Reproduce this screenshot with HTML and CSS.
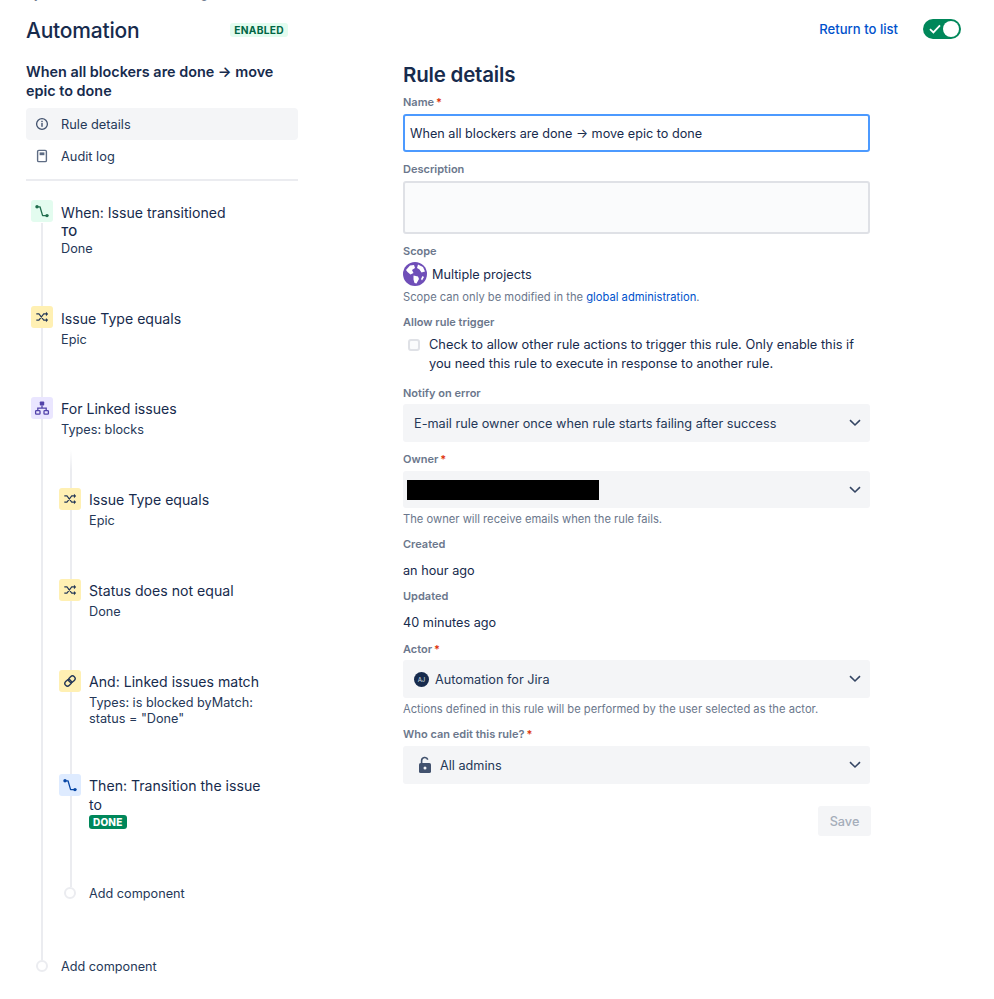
FILE: index.html
```html
<!DOCTYPE html>
<html lang="en">
<head>
<meta charset="utf-8">
<title>Automation</title>
<link rel="stylesheet" href="styles.css">
</head>
<body>
<div class="page">
  <div class="crumbs">System / Global / Project settings / Automation rules / Edit</div>
  <header class="topbar">
    <div class="topleft">
      <h1>Automation</h1>
      <span class="lozenge">ENABLED</span>
    </div>
    <div class="topright">
      <a class="link return">Return to list</a>
      <span class="toggle">
        <svg class="tick" viewBox="0 0 12 10" width="12" height="10"><path d="M1 5.2 4.4 8.4 11 1.4" fill="none" stroke="#fff" stroke-width="1.8"/></svg>
        <span class="knob"></span>
      </span>
    </div>
  </header>
  <main class="columns">
    <aside class="side">
      <h2 class="rule-name">When all blockers are done → move epic to done</h2>
      <nav class="nav">
        <div class="nav-item active">
          <svg class="nav-icon" viewBox="0 0 14 14" width="14" height="14"><circle cx="7" cy="7" r="5.4" fill="none" stroke="#42526e" stroke-width="1.3"/><rect x="6.3" y="6" width="1.4" height="3.8" fill="#42526e"/><rect x="6.3" y="3.8" width="1.4" height="1.4" fill="#42526e"/></svg>
          <span>Rule details</span>
        </div>
        <div class="nav-item">
          <svg class="nav-icon" viewBox="0 0 14 14" width="14" height="14"><rect x="2.6" y="1.4" width="8.8" height="11.2" rx="1.2" fill="none" stroke="#5e6c84" stroke-width="1.4"/><rect x="4.6" y="3.4" width="4.8" height="2.8" fill="#5e6c84"/></svg>
          <span>Audit log</span>
        </div>
      </nav>
      <hr class="divider">
      <div class="timeline">
        <div class="item item-first">
          <span class="badge green">
            <svg viewBox="0 0 16 16" width="16" height="16"><path d="M3 3.8H6L8.6 12.6H13" fill="none" stroke="#216e4e" stroke-width="1.3" stroke-linejoin="round"/><circle cx="3" cy="3.8" r="1.7" fill="#216e4e"/><circle cx="13" cy="12.6" r="1.7" fill="#216e4e"/></svg>
          </span>
          <div class="item-text">
            <div class="title">When: Issue transitioned</div>
            <div class="to">TO</div>
            <div class="sub">Done</div>
          </div>
        </div>
        <div class="item item-two">
          <span class="badge yellow">
            <svg viewBox="0 0 16 16" width="14" height="14"><path d="M1.5 4.5H4.5L10 11.5H13.5M1.5 11.5H4.5L10 4.5H13.5" fill="none" stroke="#253858" stroke-width="1.3"/><path d="M12.5 2 15 4.5 12.5 7ZM12.5 9 15 11.5 12.5 14Z" fill="#253858"/></svg>
          </span>
          <div class="item-text">
            <div class="title">Issue Type equals</div>
            <div class="sub">Epic</div>
          </div>
        </div>
        <div class="item item-branch">
          <span class="badge purple">
            <svg viewBox="0 0 16 16" width="16" height="16"><rect x="5.8" y="1.5" width="4.4" height="4" rx=".8" fill="#5243aa"/><path d="M8 5.5V8M3.8 11V8.2H12.2V11" fill="none" stroke="#5243aa" stroke-width="1.3"/><rect x="1.6" y="10.6" width="4.4" height="3.6" rx=".8" fill="none" stroke="#5243aa" stroke-width="1.3"/><rect x="10" y="10.6" width="4.4" height="3.6" rx=".8" fill="none" stroke="#5243aa" stroke-width="1.3"/></svg>
          </span>
          <div class="item-text">
            <div class="title">For Linked issues</div>
            <div class="sub">Types: blocks</div>
          </div>
        </div>
        <div class="nested">
          <div class="item item-n1">
            <span class="badge yellow">
              <svg viewBox="0 0 16 16" width="14" height="14"><path d="M1.5 4.5H4.5L10 11.5H13.5M1.5 11.5H4.5L10 4.5H13.5" fill="none" stroke="#253858" stroke-width="1.3"/><path d="M12.5 2 15 4.5 12.5 7ZM12.5 9 15 11.5 12.5 14Z" fill="#253858"/></svg>
            </span>
            <div class="item-text">
              <div class="title">Issue Type equals</div>
              <div class="sub">Epic</div>
            </div>
          </div>
          <div class="item item-n2">
            <span class="badge yellow">
              <svg viewBox="0 0 16 16" width="14" height="14"><path d="M1.5 4.5H4.5L10 11.5H13.5M1.5 11.5H4.5L10 4.5H13.5" fill="none" stroke="#253858" stroke-width="1.3"/><path d="M12.5 2 15 4.5 12.5 7ZM12.5 9 15 11.5 12.5 14Z" fill="#253858"/></svg>
            </span>
            <div class="item-text">
              <div class="title">Status does not equal</div>
              <div class="sub">Done</div>
            </div>
          </div>
          <div class="item item-n3">
            <span class="badge yellow">
              <svg viewBox="0 0 16 16" width="14" height="14"><g fill="none" stroke="#253858" stroke-width="1.6" transform="rotate(-45 8 8)"><rect x="1" y="5" width="8" height="6" rx="3"/><rect x="7" y="5" width="8" height="6" rx="3"/></g></svg>
            </span>
            <div class="item-text">
              <div class="title">And: Linked issues match</div>
              <div class="sub">Types: is blocked byMatch:<br>status = "Done"</div>
            </div>
          </div>
          <div class="item item-n4">
            <span class="badge blue">
              <svg viewBox="0 0 16 16" width="16" height="16"><path d="M3 3.8H6L8.6 12.6H13" fill="none" stroke="#0747a6" stroke-width="1.3" stroke-linejoin="round"/><circle cx="3" cy="3.8" r="1.7" fill="#0747a6"/><circle cx="13" cy="12.6" r="1.7" fill="#0747a6"/></svg>
            </span>
            <div class="item-text">
              <div class="title title-wrap">Then: Transition the issue<br>to</div>
              <span class="done">DONE</span>
            </div>
          </div>
          <div class="add add-inner">
            <span class="dot"></span>
            <span class="add-label">Add component</span>
          </div>
        </div>
        <div class="add add-outer">
          <span class="dot"></span>
          <span class="add-label">Add component</span>
        </div>
      </div>
    </aside>
    <section class="detail">
      <h2 class="detail-title">Rule details</h2>
      <label class="label label-first">Name<span class="req">*</span></label>
      <div class="input focus">When all blockers are done → move epic to done</div>
      <label class="label label-desc">Description</label>
      <div class="textarea"></div>
      <label class="label label-scope">Scope</label>
      <div class="scope">
        <svg viewBox="0 0 24 24" width="24" height="24"><circle cx="12" cy="12" r="12" fill="#6f4eb8"/><path d="M3 8 7 3.5 11 3 12 6 9 8 10.5 11 7.5 12.5 4.5 10ZM15 2.5 20 5 22 9.5 18.5 10.5 16.5 7.5 14 6ZM10.5 13.5 15 14.5 16 17 13.5 21.5 11.5 21 10.5 17.5ZM19.5 14 21 15 19 18.5 18 17Z" fill="#fff"/></svg>
        <span>Multiple projects</span>
      </div>
      <p class="hint hint-scope">Scope can only be modified in the <a class="link">global administration</a>.</p>
      <label class="label label-allow">Allow rule trigger</label>
      <div class="check">
        <span class="box"></span>
        <span class="check-text">Check to allow other rule actions to trigger this rule. Only enable this if you need this rule to execute in response to another rule.</span>
      </div>
      <label class="label label-notify">Notify on error</label>
      <div class="select"><span>E-mail rule owner once when rule starts failing after success</span>
        <svg class="chev" viewBox="0 0 12 8" width="12" height="8"><path d="M1 1.2 6 6 11 1.2" fill="none" stroke="#344563" stroke-width="1.6"/></svg>
      </div>
      <label class="label label-owner">Owner<span class="req">*</span></label>
      <div class="select select-owner"><span class="redact"></span>
        <svg class="chev" viewBox="0 0 12 8" width="12" height="8"><path d="M1 1.2 6 6 11 1.2" fill="none" stroke="#344563" stroke-width="1.6"/></svg>
      </div>
      <p class="hint hint-owner">The owner will receive emails when the rule fails.</p>
      <label class="label label-created">Created</label>
      <div class="value value-created">an hour ago</div>
      <label class="label label-updated">Updated</label>
      <div class="value value-updated">40 minutes ago</div>
      <label class="label label-actor">Actor<span class="req">*</span></label>
      <div class="select"><span class="with-icon"><span class="avatar">AJ</span>Automation for Jira</span>
        <svg class="chev" viewBox="0 0 12 8" width="12" height="8"><path d="M1 1.2 6 6 11 1.2" fill="none" stroke="#344563" stroke-width="1.6"/></svg>
      </div>
      <p class="hint hint-actor">Actions defined in this rule will be performed by the user selected as the actor.</p>
      <label class="label label-who">Who can edit this rule?<span class="req">*</span></label>
      <div class="select select-who"><span class="with-icon with-lock">
        <svg viewBox="0 0 14 18" width="14" height="18"><path d="M3.6 7V4.6a3.2 3.2 0 0 1 6.2-1" fill="none" stroke="#42526e" stroke-width="1.6"/><rect x="1" y="7" width="12" height="10" rx="1.6" fill="#42526e"/><circle cx="7" cy="12" r="1.5" fill="#f4f5f7"/></svg>
        All admins</span>
        <svg class="chev" viewBox="0 0 12 8" width="12" height="8"><path d="M1 1.2 6 6 11 1.2" fill="none" stroke="#344563" stroke-width="1.6"/></svg>
      </div>
      <div class="actions"><button class="save" type="button">Save</button></div>
    </section>
  </main>
</div>
</body>
</html>
```
FILE: styles.css
```css
* { box-sizing: border-box; }
html, body { margin: 0; padding: 0; background: #fff; }
body { font-family: Inter, "Liberation Sans", sans-serif; color: #172b4d; height: 999px; overflow: hidden; }
.page { padding: 0 33px 0 26px; }
.crumbs { font-size: 12px; line-height: 16px; color: #6b778c; margin-top: -14px; height: 16px; white-space: nowrap; }
.topbar { display: flex; justify-content: space-between; align-items: center; margin-top: 13px; height: 28px; }
.topleft { display: flex; align-items: center; width: 262px; justify-content: space-between; }
h1 { margin: 0; padding-top: 3px; font-size: 21px; font-weight: 500; line-height: 28px; letter-spacing: -0.2px; }
.lozenge { background: #e3fcef; color: #006644; font-size: 10.2px; font-weight: 700; line-height: 14px; padding: 0 4px; border-radius: 3px; letter-spacing: .3px; margin-top: 2px; }
.topright { display: flex; align-items: center; gap: 25px; }
.link { color: #0052cc; }
.return { font-size: 13.1px; font-weight: 500; }
.toggle { display: flex; align-items: center; width: 38px; height: 20px; border-radius: 10px; background: #00875a; padding: 2px; justify-content: space-between; }
.tick { margin-left: 4px; }
.knob { width: 16px; height: 16px; border-radius: 50%; background: #fff; }
.columns { display: flex; margin-top: 11px; }
.side { width: 272px; flex: none; }
.rule-name { margin: 0; font-size: 14.4px; font-weight: 600; line-height: 18.5px; padding-top: 9px; }
.nav { margin-top: 8px; }
.nav-item { display: flex; align-items: center; height: 32px; padding-left: 9px; gap: 12px; font-size: 12.8px; color: #253858; border-radius: 4px; }
.active { background: #f4f5f7; }
.divider { border: 0; height: 2px; background: #ebecf0; margin: 7px 0 0; }
.timeline { position: relative; padding-top: 19px; }
.timeline::before { content: ""; position: absolute; left: 15px; top: 42px; height: 737px; width: 2px; background: #ebecf0; }
.item { position: relative; display: flex; gap: 8px; }
.badge { position: relative; flex: none; width: 22px; height: 22px; border-radius: 3px; display: flex; align-items: center; justify-content: center; margin-left: 5px; }
.green { background: #e3fcef; }
.yellow { background: #fff0b3; }
.purple { background: #eae6ff; }
.blue { background: #deebff; }
.item-text { padding-top: 2px; }
.title { font-size: 14.1px; line-height: 20px; color: #172b4d; }
.title-wrap { line-height: 18.5px; padding-top: 1px; }
.sub { font-size: 12.7px; line-height: 16px; color: #253858; margin-top: 3px; }
.to { font-size: 11.5px; line-height: 16px; font-weight: 600; margin-top: 1px; }
.to + .sub { margin-top: 1px; }
.item-first .item-text, .item-two .item-text { padding-top: 3px; }
.item-first { height: 106px; }
.item-two { height: 91px; }
.item-branch { height: 91px; }
.nested { position: relative; padding-left: 28px; }
.nested::before { content: ""; position: absolute; left: 44px; top: -38px; height: 437px; width: 2px; background: linear-gradient(#fff, #ebecf0 20px); }
.item-n1, .item-n2 { height: 91px; }
.item-n3 { height: 104px; }
.item-n4 { height: 109px; }
.done { display: inline-block; background: #00875a; color: #fff; font-size: 10px; font-weight: 800; line-height: 14px; padding: 0 4px; border-radius: 3px; letter-spacing: .2px; vertical-align: top; margin-top: 1px; }
.add { position: relative; display: flex; align-items: center; gap: 13px; font-size: 12.7px; color: #253858; height: 20px; }
.dot { width: 12px; height: 12px; border-radius: 50%; border: 2px solid #ebecf0; background: #fff; margin-left: 10px; flex: none; }
.add-inner { margin-bottom: 53px; }
.detail { margin-left: 105px; width: 467px; flex: none; padding-top: 7px; }
.detail-title { margin: 0; font-size: 20.5px; font-weight: 600; line-height: 28px; letter-spacing: -0.2px; }
.label { display: block; font-size: 11px; font-weight: 600; line-height: 16px; color: #6b778c; }
.req { color: #de350b; margin-left: 2px; }
.label-first { margin-top: 5px; }
.input { height: 38px; margin-top: 4px; border: 2px solid #4c9aff; border-radius: 3px; font-size: 12.65px; line-height: 36px; padding-left: 5px; }
.label-desc { margin-top: 9px; }
.textarea { height: 53px; margin-top: 4px; background: #fafbfc; border: 2px solid #dfe1e6; border-radius: 3px; }
.label-scope { margin-top: 9px; }
.scope { display: flex; align-items: center; gap: 5px; font-size: 12.7px; margin-top: 3px; height: 24px; }
.hint { margin: 0; font-size: 11.2px; line-height: 16px; color: #6b778c; }
.hint-scope { margin-top: 3px; }
.label-allow { margin-top: 9px; }
.check { display: flex; align-items: flex-start; margin-top: 5px; font-size: 12.8px; line-height: 19px; }
.box { flex: none; width: 12px; height: 12px; margin: 4px 0 0 5px; border: 2px solid #dfe1e6; border-radius: 3px; background: #fafbfc; }
.check-text { margin-left: 9px; }
.label-notify { margin-top: 12px; }
.select { position: relative; display: flex; align-items: center; justify-content: space-between; height: 38px; margin-top: 3px; background: #f4f5f7; border-radius: 3px; padding: 0 9px 0 11px; font-size: 12.7px; color: #253858; }
.select-owner { padding-left: 4px; margin-top: 4px; height: 37px; }
.select-who { margin-top: 4px; }
.redact { width: 192px; height: 20px; background: #000; }
.label-owner { margin-top: 9px; }
.hint-owner { margin-top: 3px; }
.label-created { margin-top: 9px; }
.value { font-size: 12.7px; line-height: 20px; margin-top: 9px; }
.label-updated { margin-top: 7px; }
.label-actor { margin-top: 8px; }
.with-icon { display: flex; align-items: center; gap: 6px; }
.with-lock { gap: 8px; padding-left: 4px; }
.avatar { width: 15px; height: 15px; border-radius: 50%; background: #172b4d; color: #dfe1e6; font-size: 6px; display: flex; align-items: center; justify-content: center; }
.hint-actor { margin-top: 3px; }
.label-who { margin-top: 9px; }
.actions { display: flex; justify-content: flex-end; margin-top: 22px; margin-right: -1px; }
.save { border: 0; height: 30px; width: 53px; font: 500 12.7px Inter, "Liberation Sans", sans-serif; color: #a5adba; background: #f4f5f7; border-radius: 3px; padding: 0; }
```
